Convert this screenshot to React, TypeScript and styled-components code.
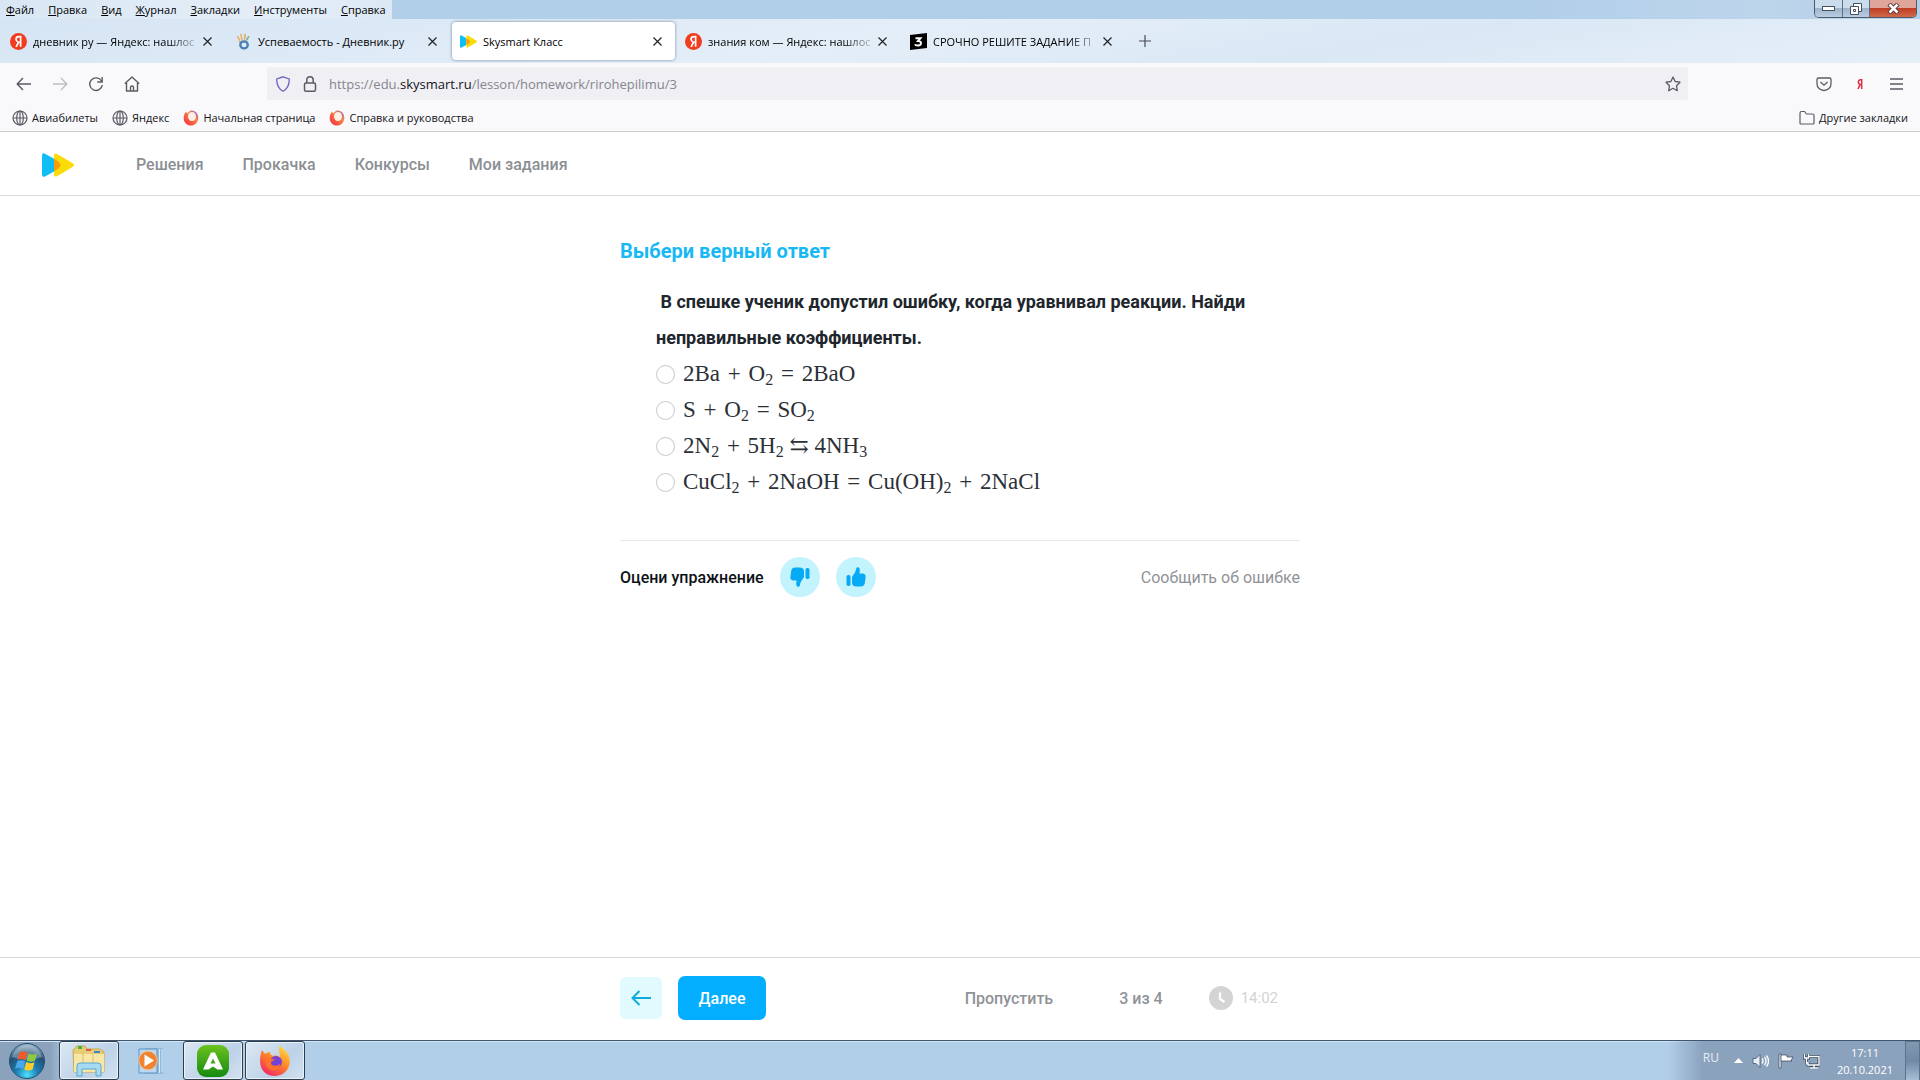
import React from "react";
import styled, { createGlobalStyle } from "styled-components";

const ui = `"Open Sans", "Noto Sans", sans-serif`;
const site = `Roboto, "Liberation Sans", sans-serif`;
const math = `"Liberation Serif", "DejaVu Serif", serif`;

const Global = createGlobalStyle`
  * { box-sizing: border-box; }
  body { margin: 0; background: #fff; font-family: ${ui}; color: #15141a; }
  button { font: inherit; color: inherit; border: 0; padding: 0; background: none; cursor: pointer; }
  a { color: inherit; text-decoration: none; }
  svg { display: block; flex: none; }
`;

const Screen = styled.div`
  display: flex;
  flex-direction: column;
  min-height: 100vh;
`;

/* ---------- browser chrome ---------- */

const TitleBar = styled.div`
  display: flex;
  justify-content: space-between;
  align-items: flex-start;
  height: 19px;
  background: linear-gradient(90deg, #b2cfea 0 80%, #bdd5eb 92%, #b4cde6);
`;

const MenuBar = styled.nav`
  display: flex;
  gap: 2px;
  height: 19px;
  background: linear-gradient(90deg, #d9e7f4, #e4eef8 70%, #dce9f5);
`;

const MenuItem = styled.button`
  padding: 0 6px;
  font-size: 11px;
  line-height: 19px;
  color: #000;
  &::first-letter { text-decoration: underline; }
`;

const WindowButtons = styled.div`
  display: flex;
  height: 18px;
  margin-right: 3px;
  border: 1px solid #4c5a6b;
  border-top: 0;
  border-radius: 0 0 5px 5px;
  overflow: hidden;
`;

const WindowButton = styled.button<{ $close?: boolean }>`
  display: flex;
  align-items: center;
  justify-content: center;
  width: ${(p) => (p.$close ? 47 : 27)}px;
  background: ${(p) =>
    p.$close
      ? "linear-gradient(#dfa59a 0 45%, #bf3f26 50%, #d0694a)"
      : "linear-gradient(#cbdcec 0 45%, #9fb4cb 50%, #b9cde2)"};
  & + & { border-left: 1px solid #5f6f83; }
`;

const TabBar = styled.div`
  display: flex;
  align-items: stretch;
  height: 44px;
  padding-left: 1px;
  background: linear-gradient(170deg, #d6e5f4, #e4eef8 45%, #dae8f5 70%, #e6eff8);
`;

const Tab = styled.div<{ $active?: boolean }>`
  display: flex;
  align-items: center;
  width: 223px;
  height: 38px;
  margin: 3px 1px;
  padding: 0 10px 0 8px;
  border-radius: 4px;
  background: ${(p) => (p.$active ? "#fff" : "transparent")};
  box-shadow: ${(p) => (p.$active ? "0 0 3px rgba(60, 80, 110, 0.7)" : "none")};
`;

const TabTitle = styled.span<{ $fade?: boolean }>`
  flex: 1;
  padding: 1px 0 0 6px;
  white-space: nowrap;
  font-size: 11px;
  line-height: 20px;
  color: #000;
  mask-image: ${(p) => (p.$fade ? "linear-gradient(90deg, #000 82%, rgba(0, 0, 0, 0.1))" : "none")};
`;

const IconButton = styled.button<{ $w?: number }>`
  display: flex;
  flex: none;
  align-items: center;
  justify-content: center;
  width: ${(p) => p.$w ?? 36}px;
`;

const Toolbar = styled.div`
  display: flex;
  align-items: center;
  height: 41px;
  padding: 0 6px;
  background: #f9f9fb;
  color: #5b5b66;
`;

const UrlBar = styled.div`
  display: flex;
  align-items: center;
  flex: 1;
  height: 33px;
  margin: 0 118px 0 117px;
  padding: 0 7px 0 8px;
  gap: 11px;
  border-radius: 3px;
  background: #f0f0f4;
`;

const Address = styled.a`
  flex: 1;
  font-size: 13px;
  line-height: 20px;
  color: #85858e;
  b { font-weight: 400; color: #15141a; }
`;

const Bookmarks = styled.div`
  display: flex;
  align-items: center;
  height: 28px;
  padding: 0 12px;
  gap: 14px;
  background: #f9f9fb;
  border-bottom: 1px solid #cccccf;
`;

const Bookmark = styled.a<{ $last?: boolean }>`
  display: flex;
  align-items: center;
  gap: 4px;
  margin-left: ${(p) => (p.$last ? "auto" : "0")};
  font-size: 11px;
  line-height: 18px;
`;

/* ---------- lesson page ---------- */

const SiteHeader = styled.header`
  display: flex;
  align-items: center;
  height: 64px;
  padding: 2px 42px 0;
  border-bottom: 1px solid #d8d8d8;
  font-family: ${site};
`;

const SiteNav = styled.nav`
  display: flex;
  gap: 39px;
  margin-left: 62px;
  font-size: 16px;
  font-weight: 500;
  color: #8b8f93;
`;

const Main = styled.main`
  flex: 1;
  width: 100%;
  max-width: 680px;
  margin: 0 auto;
  padding-top: 40px;
  font-family: ${site};
`;

const Title = styled.h1`
  margin: 0;
  font-size: 20px;
  line-height: 30px;
  font-weight: 700;
  color: #17b8f3;
`;

const Exercise = styled.fieldset`
  margin: 18px 0 40px;
  padding: 0 36px;
  border: 0;
`;

const Question = styled.legend`
  padding: 0;
  font-size: 18px;
  line-height: 36px;
  font-weight: 700;
  color: #20262c;
  white-space: pre-wrap;
`;

const Option = styled.label`
  display: flex;
  align-items: center;
  gap: 8px;
  height: 36px;
  font-family: ${math};
  font-size: 23px;
  line-height: 36px;
  color: #2b3136;
  white-space: pre;
  sub { font-size: 16px; line-height: 0; vertical-align: -4px; }
`;

const Sign = styled.span`
  padding: 0 2px;
`;

const Radio = styled.input`
  appearance: none;
  width: 19px;
  height: 19px;
  margin: 0;
  border: 1px solid #c4c7ca;
  border-radius: 50%;
  background: #fff;
`;

const Feedback = styled.section`
  display: flex;
  align-items: center;
  gap: 16px;
  padding-top: 16px;
  border-top: 1px solid #e6e8ea;
  font-size: 16px;
  font-weight: 500;
  color: #0d1216;
`;

const Vote = styled.button`
  display: grid;
  place-items: center;
  width: 40px;
  height: 40px;
  border-radius: 50%;
  background: #c3f3fc;
  color: #07aaf5;
`;

const Report = styled.button`
  margin-left: auto;
  font-weight: 400;
  color: #8f9397;
`;

const LessonFooter = styled.footer`
  border-top: 1px solid #d8d8d8;
  font-family: ${site};
  font-size: 16px;
  color: #8f9397;
`;

const FooterInner = styled.div`
  display: flex;
  align-items: center;
  width: 100%;
  max-width: 680px;
  height: 82px;
  margin: 0 auto;
  padding: 0 22px 2px 0;
`;

const Back = styled.button`
  display: grid;
  place-items: center;
  width: 42px;
  height: 42px;
  border-radius: 6px;
  background: #e0fafe;
`;

const Next = styled.button`
  width: 88px;
  height: 44px;
  margin: 0 auto 0 16px;
  border-radius: 7px;
  background: #04aeff;
  color: #fff;
  font-weight: 500;
`;

const Status = styled.div`
  display: flex;
  align-items: center;
  font-weight: 500;
`;

const Progress = styled.span`
  margin: 0 46px 0 66px;
`;

const Timer = styled.span`
  display: flex;
  align-items: center;
  gap: 8px;
  font-size: 15px;
  font-weight: 400;
  color: #d2d3d4;
`;

/* ---------- taskbar ---------- */

const Taskbar = styled.div`
  display: flex;
  align-items: stretch;
  height: 40px;
  border-top: 1px solid #3f566f;
  background: linear-gradient(90deg, #8ba2bd 0 50px, #b2cfea 70px);
  box-shadow: inset 0 1px #d5e5f4;
`;

const Start = styled.button`
  display: flex;
  align-items: center;
  width: 59px;
  padding-left: 8px;
`;

const Task = styled.button<{ $open?: boolean }>`
  display: grid;
  place-items: center;
  width: 60px;
  margin-right: 2px;
  border: ${(p) => (p.$open ? "1px solid #2f3d4d" : "0")};
  border-radius: 3px;
  background: ${(p) => (p.$open ? "linear-gradient(135deg, #dce8f4, #bdd2e8 60%, #d2e1f1)" : "transparent")};
  box-shadow: ${(p) => (p.$open ? "inset 0 0 0 1px #e9f1f9" : "none")};
`;

const Tray = styled.div`
  display: flex;
  align-items: center;
  margin-left: auto;
  padding-left: 36px;
  gap: 9px;
  background: linear-gradient(90deg, transparent, #8ba2bd 36px);
  color: #fff;
  font-size: 11px;
  line-height: 17px;
`;

const Language = styled.span`
  margin-right: 6px;
  padding-bottom: 6px;
  font-size: 12px;
  color: #e6edf5;
`;

const Clock = styled.time`
  margin: 0 3px 0 8px;
  text-align: center;
`;

const ShowDesktop = styled.button`
  align-self: stretch;
  width: 15px;
  border: 1px solid #5d738c;
  border-bottom: 0;
  background: linear-gradient(#8199b3, #7189a5 50%, #a9bfd7);
`;

/* ---------- drawings ---------- */

const CloseX = ({ label }: { label: string }) => (
  <IconButton $w={16} aria-label={label}>
    <svg width="9" height="9" viewBox="0 0 9 9" stroke="#222" strokeWidth="1.2"><path d="M.5.5l8 8M8.5.5l-8 8" /></svg>
  </IconButton>
);

const YandexIcon = () => (
  <svg width="17" height="17" viewBox="0 0 16 16">
    <circle cx="8" cy="8" r="8" fill="#f03d1f" />
    <path d="M10 13V3.500H8.300C6.600 3.500 5.700 4.500 5.700 5.900c0 1.300.7 2 2 2.700M8.200 8.500L5.700 13M8 8.700h2" fill="none" stroke="#fff" strokeWidth="1.600" />
  </svg>
);

const DnevnikIcon = () => (
  <svg width="17" height="17" viewBox="0 0 16 16" fill="none" strokeLinecap="round">
    <path d="M4.500 7L2.500 3.500M6.500 6L5.500 1.500" stroke="#e9b36e" strokeWidth="1.600" />
    <path d="M9 5.500l.5-4" stroke="#d9b06c" strokeWidth="1.600" />
    <path d="M11 6.500l1.800-3" stroke="#7fb2a0" strokeWidth="1.600" />
    <path d="M4 8.500h5" stroke="#dba871" strokeWidth="1.400" />
    <ellipse cx="8.500" cy="11.200" rx="3.500" ry="3.300" stroke="#4a80b4" strokeWidth="2.200" />
  </svg>
);

const SkyLogo = ({ w, h }: { w: number; h: number }) => (
  <svg width={w} height={h} viewBox="0 0 32 24">
    <path d="M0 2.500Q0-.8 3 .8l9 5v12.700l-9 4.900Q0 24.800 0 21.500z" fill="#10bdf5" />
    <path d="M12 3q0-4 3.500-1.800L30.500 10q3 2 0 4L15.500 22.900Q12 25 12 21z" fill="#fbdc08" />
    <path d="M12 5.800l3.500 2.200q6 4 0 8L12 18.500z" fill="#fb9b08" />
  </svg>
);

const ZnanijaIcon = () => (
  <svg width="17" height="17" viewBox="0 0 17 17">
    <path d="M0 2L17 0v15L0 17z" fill="#000" />
    <path d="M5.500 5.200h5L8 8q3 0 3 2.200T8.200 12.500 5 11.300" fill="none" stroke="#fff" strokeWidth="1.900" />
  </svg>
);

const Globe = () => (
  <svg width="16" height="16" viewBox="0 0 16 16" fill="none" stroke="#5b5b66" strokeWidth="1.200">
    <circle cx="8" cy="8" r="7" /><ellipse cx="8" cy="8" rx="3.300" ry="7" /><path d="M1 8h14M8 1v14" />
  </svg>
);

const FirefoxMark = () => (
  <svg width="16" height="16" viewBox="0 0 16 16">
    <defs><linearGradient id="fxm" x1="1" y1="0" x2="0" y2="1"><stop stopColor="#8a4ee0" /><stop offset=".35" stopColor="#f58a4a" /><stop offset="1" stopColor="#f5243c" /></linearGradient></defs>
    <path d="M3 1.500C1.500 3.500.5 6 .7 8.500 1 12.700 4 15.600 8 15.600s7.300-3.200 7.300-7.600C15.300 4 13 .8 8.500.5 6.500.5 5 2.500 4.500 3.500 4 3 3.300 2.500 3 1.500z" fill="url(#fxm)" />
    <ellipse cx="9" cy="6.500" rx="4" ry="4.600" fill="#fdeee6" />
  </svg>
);

const FirefoxIcon = () => (
  <svg width="32" height="32" viewBox="0 0 32 32">
    <defs>
      <linearGradient id="fx" x1=".8" y1="0" x2=".2" y2="1"><stop stopColor="#ffe14a" /><stop offset=".45" stopColor="#ff8a24" /><stop offset="1" stopColor="#f0246a" /></linearGradient>
    </defs>
    <path d="M21 0c1 3 6 5 8 9 5 10-1 22-13 22C7 31 1 25 1 16c0-5 1-9 2-11l3 4c1-1 3-2 5-2 0 2 1 3 3 4 3-1 6 0 7 1 0-4-2-7 0-12z" fill="url(#fx)" />
    <circle cx="17" cy="17" r="6" fill="#7542d8" />
    <path d="M6 13c4-1 6 2 10 1-1 2-4 2-4 4 0 3 6 4 9 1 0 5-4 7-8 6-5-1-7-6-7-12z" fill="#ff7228" />
  </svg>
);

const WindowsOrb = () => (
  <svg width="38" height="38" viewBox="0 0 38 38">
    <defs><radialGradient id="orb" cx=".5" cy=".9" r=".9"><stop stopColor="#4fe0fa" /><stop offset=".35" stopColor="#1b7fb5" /><stop offset=".7" stopColor="#235072" /><stop offset="1" stopColor="#9dbbd2" /></radialGradient></defs>
    <circle cx="19" cy="19" r="17.500" fill="url(#orb)" stroke="#24506f" />
    <path d="M4 15Q9 3 19 3t15 12q-15 5-30 0z" fill="#fff" opacity=".3" />
    <path d="M11.500 10.500q4-2 8 .3l-2 7.500q-4-2.300-8-.3z" fill="#ef5a2c" />
    <path d="M20.700 11.500q4 2 8.300 0l-2 7.300q-4 2-8.300 0z" fill="#8fc93f" />
    <path d="M9.200 19.300q4-2 8 .3l-2 7.500q-4-2.300-8-.3z" fill="#4aa9ea" />
    <path d="M18.200 20q4 2.200 8.300.2l-2 7.300q-4 2-8.300 0z" fill="#fccc2c" />
  </svg>
);

const ExplorerIcon = () => (
  <svg width="34" height="32" viewBox="0 0 34 32">
    <path d="M1 5l4-4h8l2 3h13l4 3v20H2z" fill="#e9cd74" stroke="#c9a850" />
    <path d="M6 1h4v3H6z" fill="#44b440" /><path d="M14 4h5v2h-5z" fill="#e05b44" /><path d="M22 6h6v2h-6z" fill="#3d86cc" />
    <path d="M2 9h30v18H2z" fill="#f7e6a4" /><path d="M11 7v12M21 8v11" stroke="#dcc078" />
    <path d="M5 31V21q0-3 3-3h18q3 0 3 3v10h-5v-7H10v7z" fill="#a5dbf2" stroke="#5ba7d1" />
  </svg>
);

const PlayerIcon = () => (
  <svg width="32" height="28" viewBox="0 0 32 28">
    <path d="M10 1h18v25l4 0-6 1H10z" fill="#8fb9dd" />
    <path d="M4 2h18v24H4z" fill="#b9d8f0" stroke="#5b93c2" />
    <path d="M24.500 2v24M27 2v23" stroke="#d8ebf9" />
    <circle cx="13" cy="13.500" r="9.300" fill="#ee8433" stroke="#f7c08e" /><path d="M9.500 7.500l9.500 6-9.500 6z" fill="#fff" />
  </svg>
);

const AIcon = () => (
  <svg width="32" height="32" viewBox="0 0 32 32">
    <defs><linearGradient id="ag" x2="0" y2="1"><stop stopColor="#6cc21d" /><stop offset="1" stopColor="#158a12" /></linearGradient></defs>
    <rect width="32" height="32" rx="9" fill="url(#ag)" />
    <path fillRule="evenodd" d="M14 7.500h4L26 24.500h-5.500L16 21.500l-4.500 3H6zM16 13.500l-2.500 5h5z" fill="#fff" />
  </svg>
);

const ThumbUp = ({ down }: { down?: boolean }) => (
  <svg width="20" height="20" viewBox="0 0 20 20" fill="currentColor">
    <g transform={down ? "rotate(180 10 10)" : undefined}>
      <rect x="0.500" y="8" width="4" height="11" rx="1.800" />
      <path d="M6 10.500c0-1.500 3.500-4.500 4-8.300.2-1.600 1-2.200 2-2 1.600.3 2 1.700 1.800 3.200L13.400 6.500H16.500c2.200 0 3.300 1.300 3.100 3.500l-.7 5.500c-.3 2.500-1.600 4-4.200 4H10.500c-3 0-4.500-1.500-4.500-4z" />
    </g>
  </svg>
);

/* ---------- page ---------- */

const menu = ["Файл", "Правка", "Вид", "Журнал", "Закладки", "Инструменты", "Справка"];

const tabs = [
  { title: "дневник ру — Яндекс: нашлос", icon: <YandexIcon />, fade: true },
  { title: "Успеваемость - Дневник.ру", icon: <DnevnikIcon /> },
  { title: "Skysmart Класс", icon: <SkyLogo w={17} h={13} />, active: true },
  { title: "знания ком — Яндекс: нашлос", icon: <YandexIcon />, fade: true },
  { title: "СРОЧНО РЕШИТЕ ЗАДАНИЕ П", icon: <ZnanijaIcon />, fade: true },
];

const bookmarks = [
  { title: "Авиабилеты", icon: <Globe /> },
  { title: "Яндекс", icon: <Globe /> },
  { title: "Начальная страница", icon: <FirefoxMark /> },
  { title: "Справка и руководства", icon: <FirefoxMark /> },
];

const options = [
  <>2Ba<Sign> + </Sign>O<sub>2</sub><Sign> = </Sign>2BaO</>,
  <>S<Sign> + </Sign>O<sub>2</sub><Sign> = </Sign>SO<sub>2</sub></>,
  <>2N<sub>2</sub><Sign> + </Sign>5H<sub>2</sub> ⇆ 4NH<sub>3</sub></>,
  <>CuCl<sub>2</sub><Sign> + </Sign>2NaOH<Sign> = </Sign>Cu(OH)<sub>2</sub><Sign> + </Sign>2NaCl</>,
];

export default function App() {
  return (
    <Screen>
      <Global />
      <TitleBar>
        <MenuBar>{menu.map((m) => <MenuItem key={m}>{m}</MenuItem>)}</MenuBar>
        <WindowButtons>
          <WindowButton aria-label="Свернуть">
            <svg width="13" height="6" viewBox="0 0 13 6"><rect x=".5" y=".5" width="12" height="4" fill="#fff" stroke="#46505e" /></svg>
          </WindowButton>
          <WindowButton aria-label="Развернуть">
            <svg width="12" height="12" viewBox="0 0 12 12" fill="#fff" stroke="#46505e"><path d="M3.500.5h8v8h-8z" /><path d="M.5 3.500h8v8h-8z" /><path d="M3.500 6.500h2v2h-2z" /></svg>
          </WindowButton>
          <WindowButton $close aria-label="Закрыть">
            <svg width="13" height="11" viewBox="0 0 13 11"><path d="M2 1l9 9M11 1l-9 9" stroke="#5a3434" strokeWidth="4.500" /><path d="M2.500 1.500l8 8M10.500 1.500l-8 8" stroke="#fff" strokeWidth="2.500" /></svg>
          </WindowButton>
        </WindowButtons>
      </TitleBar>
      <TabBar>
        {tabs.map((t) => (
          <Tab key={t.title} $active={t.active}>
            {t.icon}
            <TabTitle $fade={t.fade}>{t.title}</TabTitle>
            <CloseX label={`Закрыть ${t.title}`} />
          </Tab>
        ))}
        <IconButton $w={38} aria-label="Новая вкладка">
          <svg width="12" height="12" viewBox="0 0 12 12" stroke="#4a4a55" strokeWidth="1.200"><path d="M6 0v12M0 6h12" /></svg>
        </IconButton>
      </TabBar>
      <Toolbar>
        <IconButton aria-label="Назад">
          <svg width="16" height="16" viewBox="0 0 16 16" fill="none" stroke="currentColor" strokeWidth="1.400"><path d="M15 8H1.500M7 2L1.200 8 7 14" /></svg>
        </IconButton>
        <IconButton aria-label="Вперёд">
          <svg width="16" height="16" viewBox="0 0 16 16" fill="none" stroke="#bcbcc2" strokeWidth="1.400"><path d="M1 8h13.500M9 2l5.800 6L9 14" /></svg>
        </IconButton>
        <IconButton aria-label="Обновить">
          <svg width="16" height="16" viewBox="0 0 16 16" fill="none" stroke="currentColor" strokeWidth="1.400"><path d="M13.500 5A6.300 6.300 0 1 0 14.300 9M14.200 1v5H9.200" /></svg>
        </IconButton>
        <IconButton aria-label="Домой">
          <svg width="16" height="16" viewBox="0 0 16 16" fill="none" stroke="currentColor" strokeWidth="1.400" strokeLinejoin="round"><path d="M.8 7.800L8 1l7.200 6.800M2.500 7v8h11V7M6.500 15v-4q0-1 1.500-1t1.500 1v4" /></svg>
        </IconButton>
        <UrlBar>
          <svg width="16" height="16" viewBox="0 0 16 16" fill="none" stroke="#6a64c0" strokeWidth="1.300"><path d="M8 .8L14.200 3c.3 6-2 10-6.200 12.300C3.800 13 1.500 9 1.800 3z" /></svg>
          <svg width="16" height="16" viewBox="0 0 16 16" fill="none" stroke="#5b5b66" strokeWidth="1.500"><rect x="2.500" y="7" width="11" height="8.200" rx="1.500" /><path d="M4.800 7V4q0-3.200 3.200-3.200T11.200 4v3" /></svg>
          <Address href="#address">https://edu.<b>skysmart.ru</b>/lesson/homework/rirohepilimu/3</Address>
          <IconButton $w={16} aria-label="Добавить закладку">
            <svg width="16" height="16" viewBox="0 0 16 16" fill="none" stroke="#5b5b66" strokeWidth="1.300" strokeLinejoin="round"><path d="M8 1l2.100 4.500 4.900.7-3.500 3.500.8 5L8 12.300 3.700 14.700l.8-5L1 6.200l4.900-.7z" /></svg>
          </IconButton>
        </UrlBar>
        <IconButton aria-label="Pocket">
          <svg width="16" height="16" viewBox="0 0 16 16" fill="none" stroke="currentColor" strokeWidth="1.300" strokeLinecap="round"><path d="M2.500 2h11q1.500 0 1.500 1.500V8a7 6.500 0 0 1-14 0V3.500Q1 2 2.500 2zM4.800 6.200L8 9.200l3.200-3" /></svg>
        </IconButton>
        <IconButton aria-label="Яндекс">
          <svg width="6" height="10" viewBox="0 0 7 12" fill="none" stroke="#dd3040" strokeWidth="1.800"><path d="M5.500 12V1H4Q1.500 1 1.500 3.700T4 6.500H5.500M3.700 6.500L1 12" /></svg>
        </IconButton>
        <IconButton aria-label="Меню">
          <svg width="13" height="12" viewBox="0 0 13 12" stroke="currentColor" strokeWidth="1.300"><path d="M0 1h13M0 6h13M0 11h13" /></svg>
        </IconButton>
      </Toolbar>
      <Bookmarks>
        {bookmarks.map((b) => <Bookmark key={b.title} href="#bookmark">{b.icon}{b.title}</Bookmark>)}
        <Bookmark href="#other" $last>
          <svg width="16" height="16" viewBox="0 0 16 16" fill="none" stroke="#5b5b66" strokeWidth="1.200"><path d="M1 13V3q0-1.500 1.500-1.500h3L7.500 4h6Q15 4 15 5.500V13q0 1-1 1H2q-1 0-1-1z" /></svg>
          Другие закладки
        </Bookmark>
      </Bookmarks>

      <SiteHeader>
        <a href="#home" aria-label="Skysmart"><SkyLogo w={32} h={24} /></a>
        <SiteNav>
          <a href="#solutions">Решения</a>
          <a href="#training">Прокачка</a>
          <a href="#contests">Конкурсы</a>
          <a href="#tasks">Мои задания</a>
        </SiteNav>
      </SiteHeader>
      <Main>
        <Title>Выбери верный ответ</Title>
        <Exercise>
          <Question>{" В спешке ученик допустил ошибку, когда уравнивал реакции. Найди неправильные коэффициенты."}</Question>
          {options.map((o, i) => (
            <Option key={i}><Radio type="radio" name="answer" /><span>{o}</span></Option>
          ))}
        </Exercise>
        <Feedback>
          <span>Оцени упражнение</span>
          <Vote aria-label="Не нравится"><ThumbUp down /></Vote>
          <Vote aria-label="Нравится"><ThumbUp /></Vote>
          <Report>Сообщить об ошибке</Report>
        </Feedback>
      </Main>
      <LessonFooter>
        <FooterInner>
          <Back aria-label="Назад">
            <svg width="20" height="16" viewBox="0 0 20 16" fill="none" stroke="#10acd8" strokeWidth="2"><path d="M20 8H1.500M8.500 1l-7 7 7 7" /></svg>
          </Back>
          <Next>Далее</Next>
          <Status>
            <button>Пропустить</button>
            <Progress>3 из 4</Progress>
            <Timer>
              <svg width="24" height="24" viewBox="0 0 24 24"><circle cx="12" cy="12" r="12" fill="#d4d4d4" /><path d="M11 6.500V13l4.500 3" fill="none" stroke="#fff" strokeWidth="2.200" /></svg>
              14:02
            </Timer>
          </Status>
        </FooterInner>
      </LessonFooter>

      <Taskbar>
        <Start aria-label="Пуск"><WindowsOrb /></Start>
        <Task $open aria-label="Проводник"><ExplorerIcon /></Task>
        <Task aria-label="Проигрыватель"><PlayerIcon /></Task>
        <Task $open aria-label="Амиго"><AIcon /></Task>
        <Task $open aria-label="Firefox"><FirefoxIcon /></Task>
        <Tray>
          <Language>RU</Language>
          <svg width="9" height="5" viewBox="0 0 9 5"><path d="M4.500 0L9 5H0z" fill="#fff" /></svg>
          <svg width="17" height="16" viewBox="0 0 17 16" fill="none" stroke="#fff" strokeWidth="1.300"><path d="M1 5.500h3L8 1.500v13L4 10.500H1z" fill="#e8eef5" stroke="#46566a" strokeWidth=".8" /><path d="M10 5.500q2 2.500 0 5M12.500 4q3 4 0 8M14.500 2.500q4 5.500 0 11" /></svg>
          <svg width="16" height="16" viewBox="0 0 16 16" fill="#fff" stroke="#33445a" strokeWidth=".7"><path d="M1 1h2v14H1z" /><path d="M3 2h6v2h6l-2 3.500 1 .5H3z" /></svg>
          <svg width="17" height="16" viewBox="0 0 17 16" fill="none">
            <path d="M6 3.500h10v8.500H5V9M7 15h8M11 12v3M1.500 1v4h4V1M3.500 4.500v7" stroke="#33445a" strokeWidth="3" />
            <path d="M6 3.500h10v8.500H5V9M7 15h8M11 12v3M1.500 1v4h4V1M3.500 4.500v7" stroke="#fff" strokeWidth="1.400" />
          </svg>
          <Clock>17:11<br />20.10.2021</Clock>
          <ShowDesktop aria-label="Показать рабочий стол" />
        </Tray>
      </Taskbar>
    </Screen>
  );
}
